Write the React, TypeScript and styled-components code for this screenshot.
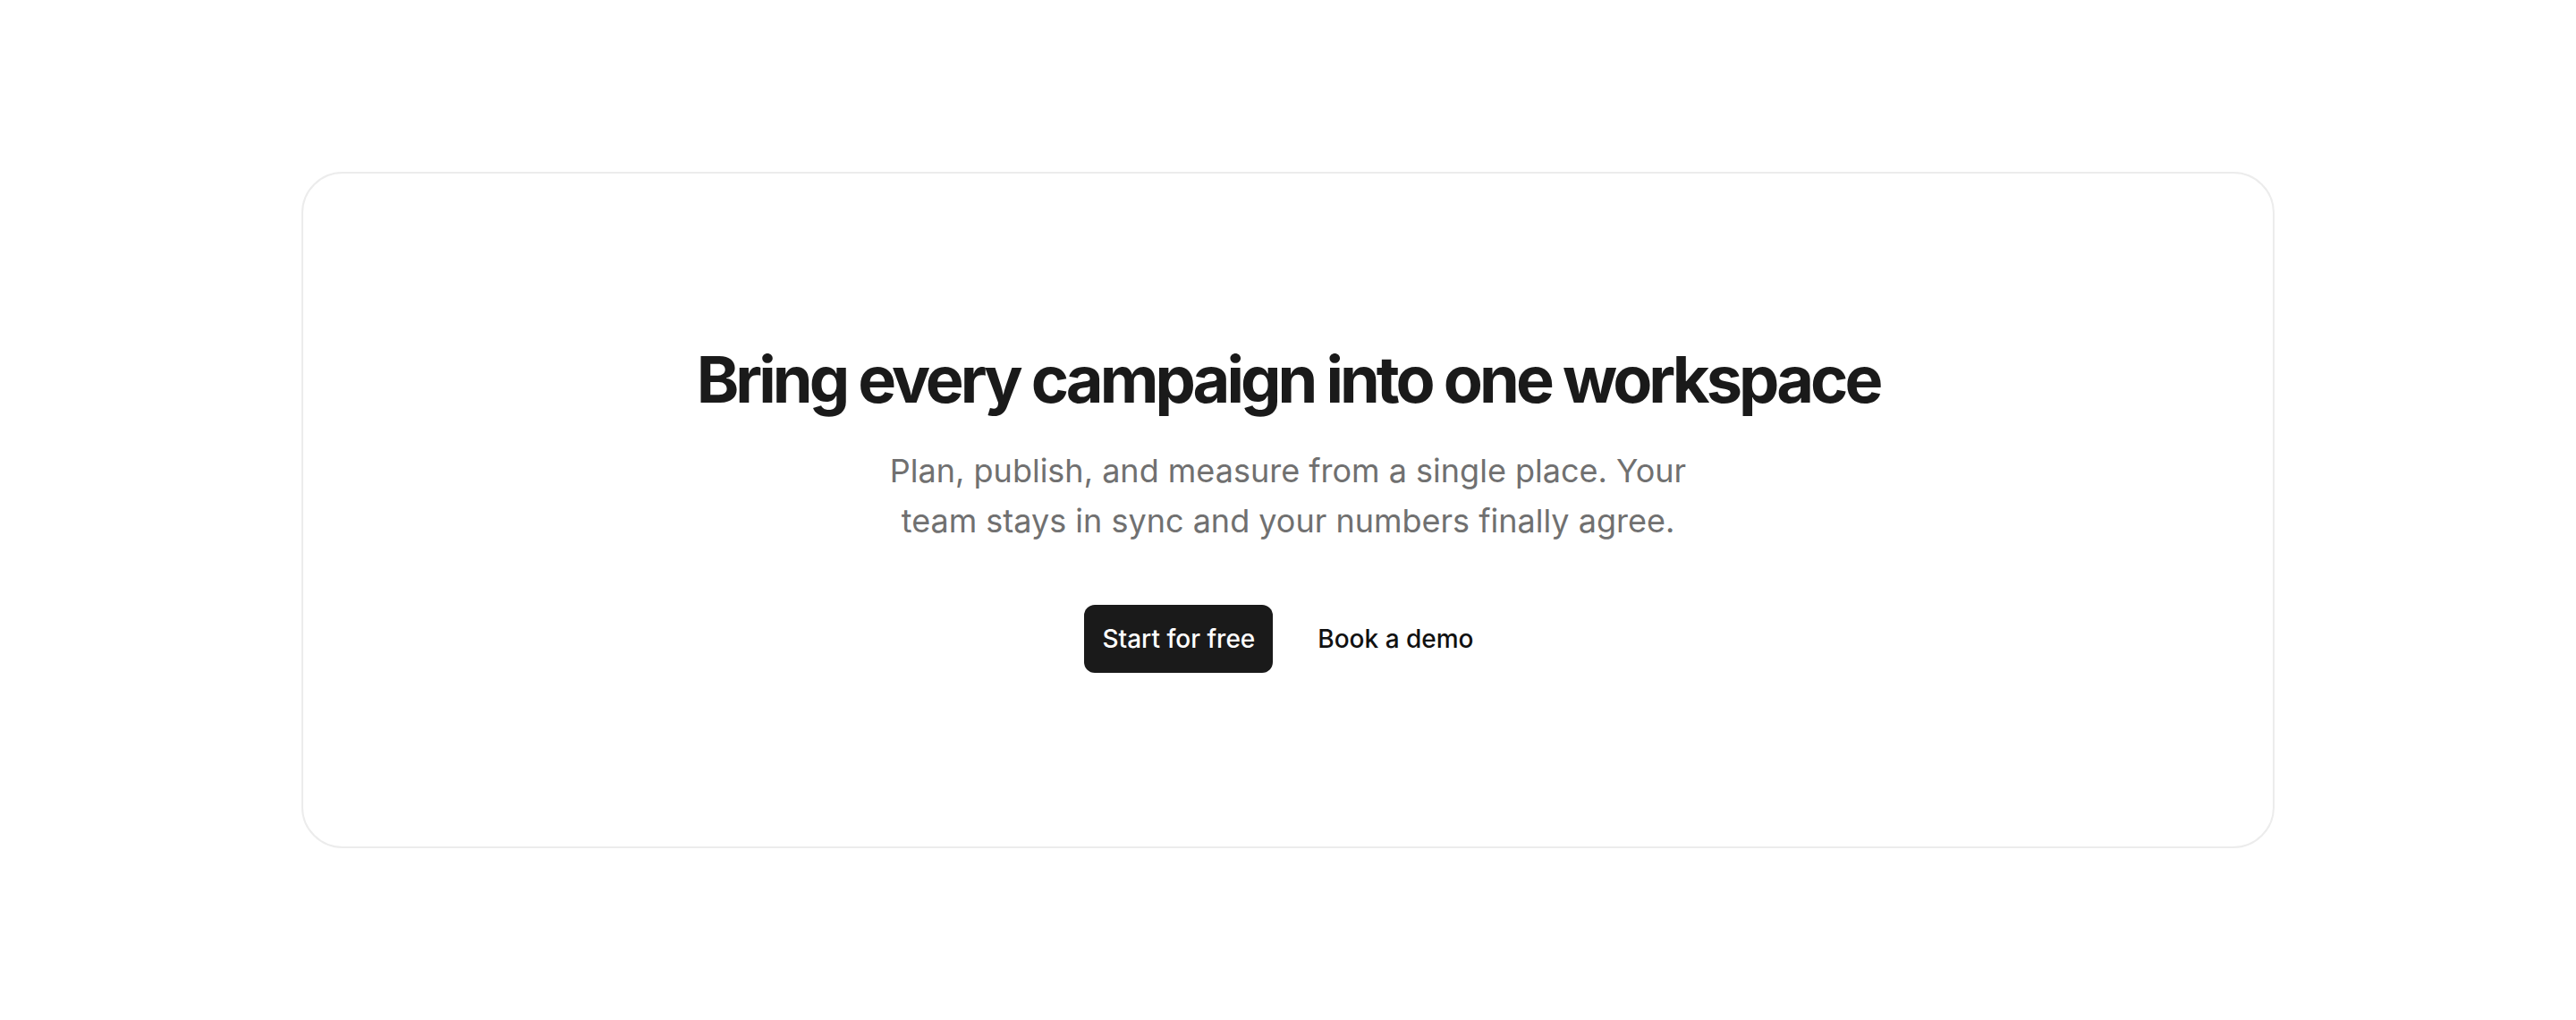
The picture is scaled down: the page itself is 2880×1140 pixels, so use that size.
import React from "react";
import styled, { createGlobalStyle } from "styled-components";

const GlobalStyle = createGlobalStyle`
    * {
        box-sizing: border-box;
    }

    body {
        margin: 0;
        background: #ffffff;
        font-family: Inter, "Noto Sans", "Liberation Sans", sans-serif;
        -webkit-font-smoothing: antialiased;
    }
`;

export default function App() {
    return (
        <Page>
            <GlobalStyle />
            <Card>
                <Title>Bring every campaign into one workspace</Title>
                <Lead>
                    Plan, publish, and measure from a single place. Your team stays in sync and your
                    numbers finally agree.
                </Lead>
                <Actions>
                    <Button $primary>Start for free</Button>
                    <Button>Book a demo</Button>
                </Actions>
            </Card>
        </Page>
    );
}


// STYLES
const Page = styled.main`
    min-height: 100vh;
    display: flex;
    align-items: center;
    justify-content: center;
    padding: 0 337px;
`;

const Card = styled.section`
    width: 100%;
    max-width: 2206px;
    display: flex;
    flex-direction: column;
    align-items: center;
    padding: 190px 48px 194px;
    border: 2px solid #ececec;
    border-radius: 46px;
    background: #ffffff;
`;

const Title = styled.h1`
    margin: 0;
    font-size: 72px;
    line-height: 79px;
    font-weight: 700;
    letter-spacing: -0.055em;
    color: #1a1a1a;
    text-align: center;
`;

const Lead = styled.p`
    margin: 35px 0 0;
    max-width: 910px;
    font-size: 36px;
    line-height: 56px;
    font-weight: 400;
    color: #707070;
    text-align: center;
`;

const Actions = styled.div`
    margin-top: 66px;
    display: flex;
    align-items: center;
    gap: 30px;
`;

const Button = styled.button<{ $primary?: boolean }>`
    height: 76px;
    padding: 0 20px;
    border: none;
    border-radius: 12px;
    font-family: inherit;
    font-size: 28px;
    font-weight: 500;
    background: ${({ $primary }) => ($primary ? "#1a1a1a" : "transparent")};
    color: ${({ $primary }) => ($primary ? "#ffffff" : "#111111")};
    cursor: pointer;
`;
